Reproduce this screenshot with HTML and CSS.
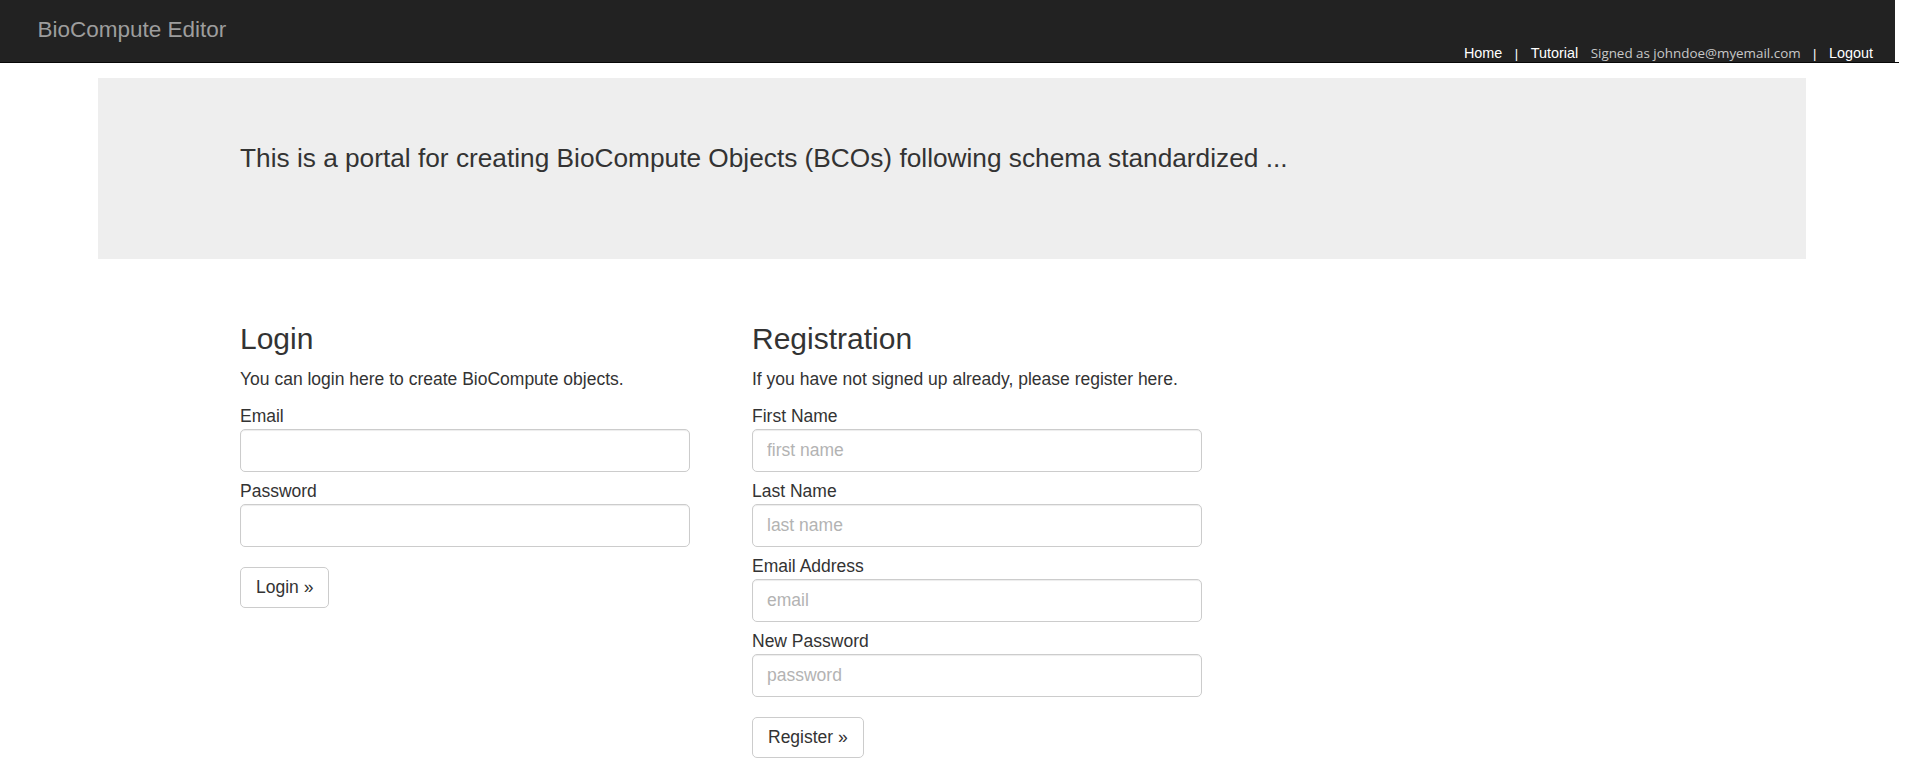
FILE: index.html
```html
<!DOCTYPE html>
<html lang="en">
<head>
<meta charset="utf-8">
<title>BioCompute Editor</title>
<link rel="stylesheet" href="styles.css">
</head>
<body>
<header class="topbar">
  <div class="navbar">
    <a class="brand" href="#">BioCompute Editor</a>
    <nav class="navlinks">
      <a class="navlink" href="#">Home</a>
      <span class="sep">|</span>
      <a class="navlink" href="#">Tutorial</a>
      <span class="signed">Signed as johndoe@myemail.com</span>
      <span class="sep">|</span>
      <a class="navlink" href="#">Logout</a>
    </nav>
  </div>
</header>
<main class="page">
  <section class="jumbotron">
    <p class="lead">This is a portal for creating BioCompute Objects (BCOs) following schema standardized ...</p>
  </section>
  <section class="columns">
    <div class="col">
      <h3 class="heading">Login</h3>
      <p class="desc">You can login here to create BioCompute objects.</p>
      <div class="field">
        <label class="label">Email</label>
        <input class="input" type="text">
      </div>
      <div class="field">
        <label class="label">Password</label>
        <input class="input" type="password">
      </div>
      <button class="btn" type="button">Login »</button>
    </div>
    <div class="col">
      <h3 class="heading">Registration</h3>
      <p class="desc">If you have not signed up already, please register here.</p>
      <div class="field">
        <label class="label">First Name</label>
        <input class="input" type="text" placeholder="first name">
      </div>
      <div class="field">
        <label class="label">Last Name</label>
        <input class="input" type="text" placeholder="last name">
      </div>
      <div class="field">
        <label class="label">Email Address</label>
        <input class="input" type="text" placeholder="email">
      </div>
      <div class="field">
        <label class="label">New Password</label>
        <input class="input" type="password" placeholder="password">
      </div>
      <button class="btn" type="button">Register »</button>
    </div>
  </section>
</main>
</body>
</html>
```

FILE: styles.css
```css
html, body {
  margin: 0;
  padding: 0;
  background: #fff;
}
body {
  font-family: "Liberation Sans", Arial, sans-serif;
  font-size: 17.5px;
  line-height: 25px;
  color: #333;
  overflow: hidden;
}
.topbar {
  width: 1899px;
  border-bottom: 1px solid #080808;
}
.navbar {
  width: 1895px;
  height: 62px;
  background: #222;
  display: flex;
  justify-content: space-between;
  box-sizing: border-box;
}
.brand {
  padding: 17px 0 0 37.5px;
  font-size: 22.5px;
  line-height: 25px;
  color: #9d9d9d;
  text-decoration: none;
}
.navlinks {
  align-self: flex-end;
  display: flex;
  align-items: baseline;
  gap: 12.5px;
  padding: 0 22px 0 0;
  font-size: 14.4px;
  line-height: 16px;
}
.navlink {
  color: #fff;
  text-decoration: none;
}
.sep {
  color: #fff;
  font-size: 13px;
}
.signed {
  font-family: "Open Sans", sans-serif;
  font-size: 13.4px;
  color: #c8c8c8;
}
.jumbotron {
  margin: 15px 0 0 98px;
  width: 1708px;
  box-sizing: border-box;
  padding: 62px 0 62px 142px;
  background: #eee;
}
.lead {
  margin: 0 0 19px;
  font-size: 26.25px;
  line-height: 37.5px;
}
.columns {
  display: flex;
  gap: 62px;
  padding-left: 240px;
  margin-top: 63.5px;
}
.col {
  width: 450px;
}
.heading {
  margin: 0 0 12px;
  font-size: 30px;
  line-height: 33px;
  font-weight: 500;
}
.desc {
  margin: 0 0 12px;
}
.field {
  margin-bottom: 7px;
}
.label {
  display: block;
  line-height: 25px;
}
.input {
  display: block;
  width: 100%;
  height: 43px;
  box-sizing: border-box;
  padding: 0 14px;
  border: 1px solid #ccc;
  border-radius: 5px;
  box-shadow: inset 0 1px 1px rgba(0,0,0,0.075);
  font-family: "Liberation Sans", Arial, sans-serif;
  font-size: 17.5px;
  color: #555;
  background: #fff;
  margin: 0;
}
.input::placeholder {
  color: #b3b3b3;
}
.btn {
  margin-top: 13px;
  padding: 7px 15px;
  border: 1px solid #ccc;
  border-radius: 5px;
  background: #fff;
  font-family: "Liberation Sans", Arial, sans-serif;
  font-size: 17.5px;
  line-height: 25px;
  color: #333;
}
```
